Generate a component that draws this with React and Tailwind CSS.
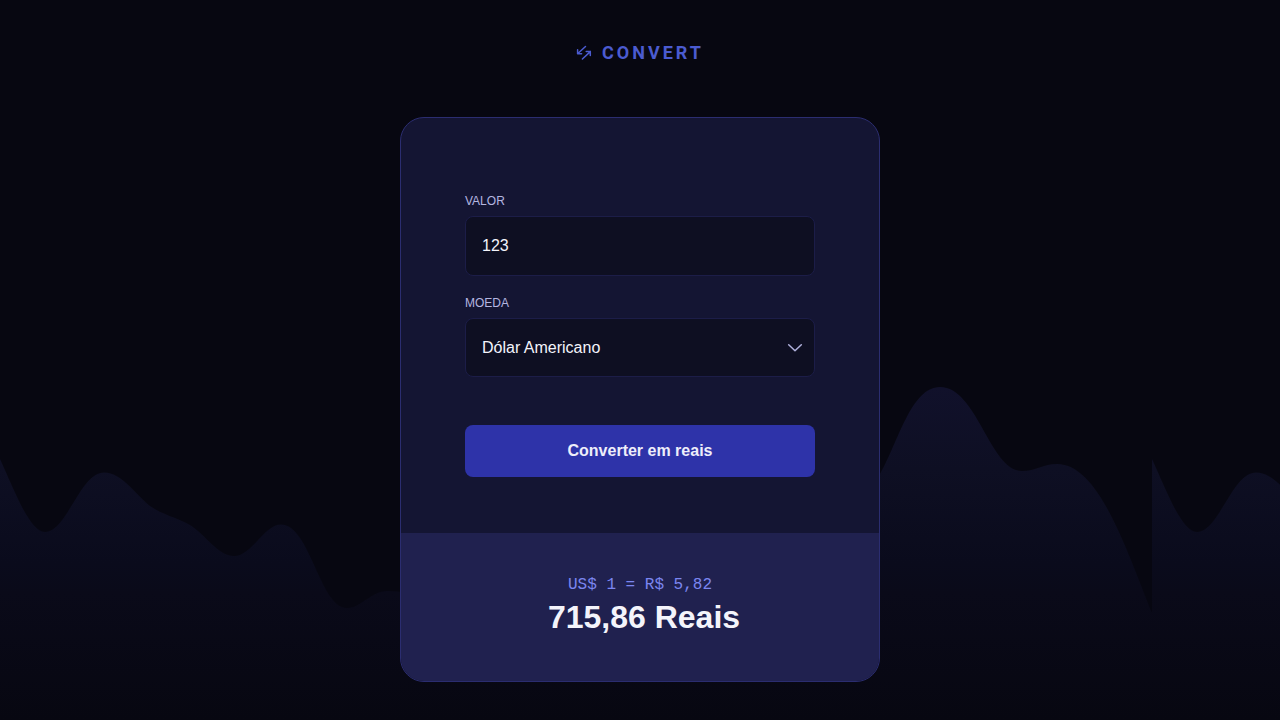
import { useState } from "react";

const CURRENCIES = [
  { code: "USD", label: "Dólar Americano", symbol: "US$", rate: 5.82 },
  { code: "EUR", label: "Euro", symbol: "€", rate: 6.32 },
  { code: "GBP", label: "Libra Esterlina", symbol: "£", rate: 7.36 },
];

const formatNumber = (value) =>
  value.toLocaleString("pt-BR", { minimumFractionDigits: 2, maximumFractionDigits: 2 });

function Waves() {
  return (
    <svg aria-hidden="true" className="absolute bottom-0 left-0 -z-10 h-[334px] w-full">
      <defs>
        <linearGradient id="wave-fill" x1="0" y1="0" x2="0" y2="334" gradientUnits="userSpaceOnUse">
          <stop offset="0" stopColor="#11112b" />
          <stop offset="0.25" stopColor="#0e0f23" />
          <stop offset="0.53" stopColor="#0a0b1c" />
          <stop offset="0.62" stopColor="#0a0a19" />
          <stop offset="1" stopColor="#070711" />
        </linearGradient>
        <pattern id="wave" width="1152" height="334" patternUnits="userSpaceOnUse">
          <path
            fill="url(#wave-fill)"
            d="M0 73C15 106 30 146 45 146C67 146 80 86.500 104 86.500C122 86.500 134 107 150 120C163 129 176 131 190 139C206 149 218 170 234 170C252 170 264 138.500 281 138.500C310 138.500 320 222 347 222C362 222 370 205 388 205C440 205 470 250 520 250C600 250 640 150 700 150C750 150 780 190 820 160C845 142 862 115 880 88C898 57 911 1 940 1C977 1 990 85 1022 85C1036 85 1043 78 1057 78C1098 78 1125 159 1152 227V334H0Z"
          />
        </pattern>
      </defs>
      <rect width="100%" height="334" fill="url(#wave)" />
    </svg>
  );
}

function Logo() {
  return (
    <h1 className="flex items-center gap-2.5 text-[#4b5bd0]">
      <svg
        aria-hidden="true"
        className="size-4"
        viewBox="0 0 16 16"
        fill="none"
        stroke="currentColor"
        strokeWidth="1.5"
        strokeLinecap="round"
        strokeLinejoin="round"
      >
        <path d="M9.500 1.500L1.600 8.800M1.600 4.800V8.800H5.600M6.400 14L14.300 6.600M10.200 6.600H14.300V10.600" />
      </svg>
      <span className="font-[Roboto,sans-serif] text-lg leading-6 font-bold tracking-[3px]">
        CONVERT
      </span>
    </h1>
  );
}

const fieldClass =
  "w-full appearance-none rounded-lg border border-[#1c1d48] bg-[#0e0f22] px-4 text-base text-[#f4f4fb] outline-none focus-visible:border-[#4b5bd0]";
const labelClass = "text-xs leading-4 text-[#b5b6e0] uppercase";

export default function App() {
  const [amount, setAmount] = useState("123");
  const [code, setCode] = useState("USD");
  const currency = CURRENCIES.find((item) => item.code === code);
  const [result, setResult] = useState({ symbol: "US$", rate: 5.82, total: 715.86 });

  const convert = (event) => {
    event.preventDefault();
    const value = Number(amount.replace(",", ".")) || 0;
    setResult({ symbol: currency.symbol, rate: currency.rate, total: value * currency.rate });
  };

  return (
    <main className="relative isolate flex min-h-screen flex-col items-center bg-[#070711] px-4 pt-[41px] pb-[38px] font-['Liberation_Sans',Arial,sans-serif]">
      <Waves />
      <Logo />
      <section className="mt-[52px] w-full max-w-[480px] overflow-hidden rounded-3xl border border-[#2b2d70] bg-[#141533]">
        <form onSubmit={convert} className="flex flex-col px-16 pt-[75px] pb-14">
          <label htmlFor="amount" className={labelClass}>
            Valor
          </label>
          <input
            id="amount"
            inputMode="decimal"
            value={amount}
            onChange={(event) => setAmount(event.target.value)}
            className={`${fieldClass} mt-[7px] h-[60px]`}
          />
          <label htmlFor="currency" className={`${labelClass} mt-[19px]`}>
            Moeda
          </label>
          <div className="relative mt-[7px]">
            <select
              id="currency"
              value={code}
              onChange={(event) => setCode(event.target.value)}
              className={`${fieldClass} block h-[59px]`}
            >
              {CURRENCIES.map((item) => (
                <option key={item.code} value={item.code}>
                  {item.label}
                </option>
              ))}
            </select>
            <svg
              aria-hidden="true"
              className="pointer-events-none absolute inset-y-0 right-3 my-auto h-2 w-4"
              viewBox="0 0 16 8"
              fill="none"
              stroke="#b0b1dc"
              strokeWidth="1.5"
              strokeLinecap="round"
              strokeLinejoin="round"
            >
              <path d="M1.700 0.800L8 6.800L14.300 0.800" />
            </svg>
          </div>
          <button
            type="submit"
            className="mt-12 h-[52px] cursor-pointer rounded-lg bg-[#2e33a9] text-base font-bold text-[#eeeefa]"
          >
            Converter em reais
          </button>
        </form>
        <footer className="bg-[#20214f] pt-10 pb-11 text-center">
          <p className="font-['Liberation_Mono',monospace] text-base leading-6 text-[#7b86f0]">
            {result.symbol} 1 = R$ {formatNumber(result.rate)}
          </p>
          <output htmlFor="amount currency" className="block pl-2 text-[32px] leading-10 font-bold text-[#f4f4fb]">
            {formatNumber(result.total)} Reais
          </output>
        </footer>
      </section>
    </main>
  );
}
